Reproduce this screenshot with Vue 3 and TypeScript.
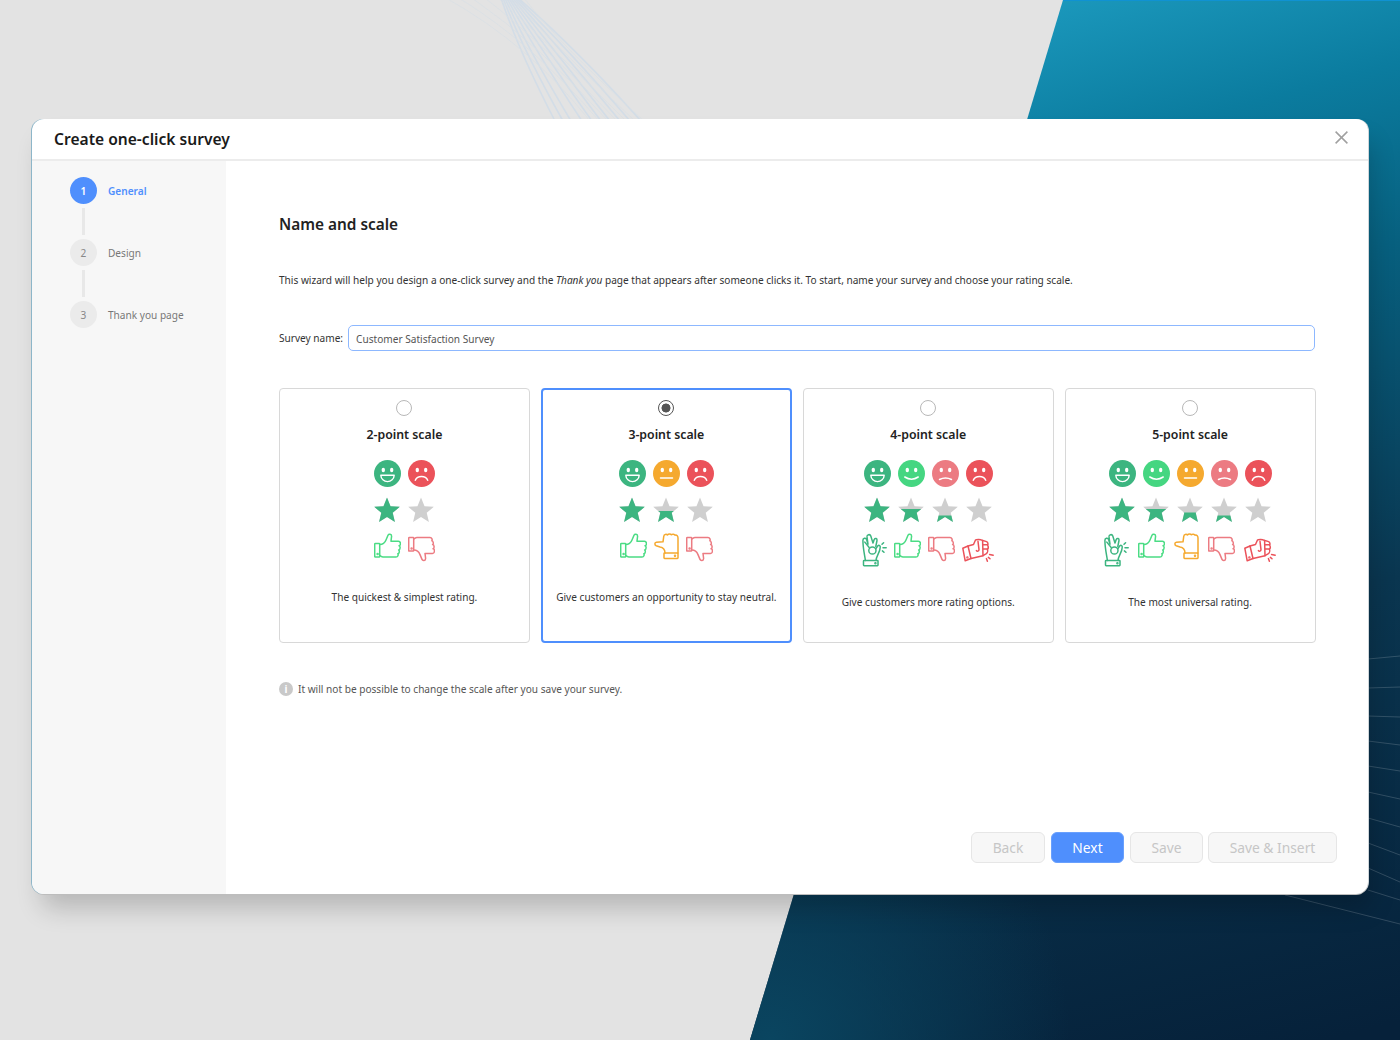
<script setup lang="ts">
type Face = 'vhappy' | 'happy' | 'neutral' | 'sad' | 'vsad'
type Hand = 'ok' | 'up' | 'side' | 'down' | 'fist'
interface Scale {
  title: string
  faces: Face[]
  stars: number[]
  hands: Hand[]
  desc: string
  checked?: boolean
}

const scales: Scale[] = [
  { title: '2-point scale', faces: ['vhappy', 'vsad'], stars: [0, 100], hands: ['up', 'down'], desc: 'The quickest & simplest rating.' },
  { title: '3-point scale', faces: ['vhappy', 'neutral', 'vsad'], stars: [0, 55, 100], hands: ['up', 'side', 'down'], desc: 'Give customers an opportunity to stay neutral.', checked: true },
  { title: '4-point scale', faces: ['vhappy', 'happy', 'sad', 'vsad'], stars: [0, 47, 74, 100], hands: ['ok', 'up', 'down', 'fist'], desc: 'Give customers more rating options.' },
  { title: '5-point scale', faces: ['vhappy', 'happy', 'neutral', 'sad', 'vsad'], stars: [0, 47, 61, 74, 100], hands: ['ok', 'up', 'side', 'down', 'fist'], desc: 'The most universal rating.' },
]

const handSize: Record<Hand, [number, number]> = {
  ok: [25, 34],
  up: [27, 29],
  side: [25, 29],
  down: [27, 29],
  fist: [32, 34],
}

const steps = [
  { n: 1, label: 'General', active: true },
  { n: 2, label: 'Design', active: false },
  { n: 3, label: 'Thank you page', active: false },
]

const thickEnds = [555, 563, 571, 582, 592, 601, 610, 620, 630, 641]
const thick = thickEnds.map((end, i) => {
  const top = 501 + i * 1.9
  const cx = top + (end - top) * (0.32 + i * 0.018)
  return `M${top} -2 Q${cx} 50 ${end} 121`
})
const thin = [0, 1, 2, 3, 4, 5, 6].map((i) => {
  const top = 446 + i * 13
  return `M${top} -2 Q${530 + i * 5} 45 ${590 + i * 9} 121`
})
const rightLines = [
  [659, 656], [688, 687], [716, 717], [741, 745], [766, 771], [792, 799], [818, 827], [843, 855], [868, 882], [890, 900],
]
</script>

<template>
  <div class="page">
    <svg class="backdrop" width="1400" height="1040" viewBox="0 0 1400 1040">
      <defs>
        <linearGradient id="panel" gradientUnits="userSpaceOnUse" x1="1050" y1="0" x2="1330" y2="1040">
          <stop offset="0" stop-color="#1b98bc" />
          <stop offset="0.14" stop-color="#0b7c9f" />
          <stop offset="0.3" stop-color="#07607f" />
          <stop offset="0.6" stop-color="#0a3650" />
          <stop offset="1" stop-color="#06213a" />
        </linearGradient>
        <radialGradient id="glow" gradientUnits="userSpaceOnUse" cx="770" cy="1040" r="300">
          <stop offset="0" stop-color="#0a4560" />
          <stop offset="1" stop-color="#0a4560" stop-opacity="0" />
        </radialGradient>
      </defs>
      <polygon points="1063,0 1400,0 1400,1040 750,1040" fill="url(#panel)" />
      <polygon points="1063,0 1400,0 1400,1040 750,1040" fill="url(#glow)" />
      <rect x="1063" y="0" width="337" height="1" fill="#1092d2" />
      <g fill="none" stroke="#d3dde7" stroke-width="1.6">
        <path v-for="d in thick" :key="d" :d="d" />
      </g>
      <g fill="none" stroke="#d9dfe5" stroke-width="0.8">
        <path v-for="d in thin" :key="d" :d="d" />
      </g>
      <g stroke="#ffffff" stroke-opacity="0.17" stroke-width="1">
        <line v-for="l in rightLines" :key="l[0]" x1="1368" :y1="l[0]" x2="1400" :y2="l[1]" />
        <line x1="1285" y1="895" x2="1400" y2="924" />
      </g>
    </svg>

    <svg class="defs" width="0" height="0">
      <defs>
        <symbol id="vhappy" viewBox="0 0 27 27">
          <circle cx="13.5" cy="13.5" r="13.5" fill="#3cb580" />
          <ellipse cx="9.3" cy="10" rx="1.7" ry="2.2" fill="#fff" />
          <ellipse cx="17.7" cy="10" rx="1.7" ry="2.2" fill="#fff" />
          <path d="M6.8 15.2H20.2C20 19 17 21.6 13.5 21.6S7 19 6.8 15.2Z" fill="none" stroke="#fff" stroke-width="1.4" stroke-linejoin="round" />
        </symbol>
        <symbol id="happy" viewBox="0 0 27 27">
          <circle cx="13.5" cy="13.5" r="13.5" fill="#45d681" />
          <ellipse cx="9.3" cy="10" rx="1.7" ry="2.2" fill="#fff" />
          <ellipse cx="17.7" cy="10" rx="1.7" ry="2.2" fill="#fff" />
          <path d="M6.8 17Q13.5 21.4 20.2 17" fill="none" stroke="#fff" stroke-width="1.5" stroke-linecap="round" />
        </symbol>
        <symbol id="neutral" viewBox="0 0 27 27">
          <circle cx="13.5" cy="13.5" r="13.5" fill="#f5a92f" />
          <ellipse cx="9.3" cy="10" rx="1.7" ry="2.2" fill="#fff" />
          <ellipse cx="17.7" cy="10" rx="1.7" ry="2.2" fill="#fff" />
          <path d="M7.5 18H19.5" fill="none" stroke="#fff" stroke-width="1.5" stroke-linecap="round" />
        </symbol>
        <symbol id="sad" viewBox="0 0 27 27">
          <circle cx="13.5" cy="13.5" r="13.5" fill="#ec7b82" />
          <ellipse cx="9.3" cy="10" rx="1.7" ry="2.2" fill="#fff" />
          <ellipse cx="17.7" cy="10" rx="1.7" ry="2.2" fill="#fff" />
          <path d="M7.5 19.5Q13.5 16.4 19.5 19.5" fill="none" stroke="#fff" stroke-width="1.5" stroke-linecap="round" />
        </symbol>
        <symbol id="vsad" viewBox="0 0 27 27">
          <circle cx="13.5" cy="13.5" r="13.5" fill="#eb525a" />
          <ellipse cx="9.3" cy="10" rx="1.7" ry="2.2" fill="#fff" />
          <ellipse cx="17.7" cy="10" rx="1.7" ry="2.2" fill="#fff" />
          <path d="M7.3 20.2C9.5 15.4 17.5 15.4 19.7 20.2" fill="none" stroke="#fff" stroke-width="1.5" stroke-linecap="round" />
        </symbol>

        <symbol id="up" viewBox="0 0 27 29">
          <g fill="none" stroke="#4bdc84" stroke-width="1.5" stroke-linejoin="round" stroke-linecap="round">
            <rect x="0.7" y="10.5" width="5" height="13.5" rx="0.6" />
            <circle cx="3.6" cy="21" r="0.5" fill="#4bdc84" />
            <path d="M5.7 11.5C8.2 11.5 11 9.5 12 7L14 2.2C14.6 0.8 17.6 0.6 17.6 3.2L17 8.2H24.5C27 8.2 27 12.6 25 12.8C26.6 13.2 26.4 16.8 24.6 17C25.8 17.6 25.4 20.6 23.8 20.8C24.6 21.6 24 24 22 24H9C7.5 24 6.8 23 5.7 22.5" />
          </g>
        </symbol>
        <symbol id="down" viewBox="0 0 27 29">
          <g transform="translate(0 28.6) scale(1 -1)" fill="none" stroke="#ec7b82" stroke-width="1.5" stroke-linejoin="round" stroke-linecap="round">
            <rect x="0.7" y="10.5" width="5" height="13.5" rx="0.6" />
            <circle cx="3.6" cy="13.2" r="0.5" fill="#ec7b82" />
            <path d="M5.7 11.5C8.2 11.5 11 9.5 12 7L14 2.2C14.6 0.8 17.6 0.6 17.6 3.2L17 8.2H24.5C27 8.2 27 12.6 25 12.8C26.6 13.2 26.4 16.8 24.6 17C25.8 17.6 25.4 20.6 23.8 20.8C24.6 21.6 24 24 22 24H9C7.5 24 6.8 23 5.7 22.5" />
          </g>
        </symbol>
        <symbol id="side" viewBox="0 0 25 29">
          <g fill="none" stroke="#f5a92f" stroke-width="1.5" stroke-linejoin="round" stroke-linecap="round">
            <rect x="10" y="20" width="14" height="5.4" rx="0.6" />
            <circle cx="21" cy="22.8" r="0.5" fill="#f5a92f" />
            <path d="M11 20C11 16 9 14.5 6 14L2.2 12.8C0.4 12 0.4 9.4 2.4 9.2L9 8.8L9.8 3.2C10 1 12.6 1 13.4 2C14.4 0.6 16.8 0.8 17.4 1.8C18.4 0.8 20.6 1.2 21 2.2C23 1.8 24 3 24 5V20" />
          </g>
        </symbol>
        <symbol id="ok" viewBox="0 0 25 34">
          <g transform="translate(0 0.5)" fill="none" stroke="#3cb580" stroke-width="1.5" stroke-linejoin="round" stroke-linecap="round">
            <rect x="1.5" y="27" width="14.5" height="5.2" rx="0.6" />
            <circle cx="13.4" cy="29.7" r="0.5" fill="#3cb580" />
            <path d="M3.4 27C2.8 22 1 15.6 0.9 7C0.8 4.6 3.8 3.8 4.6 6L6 10.8L5 3.4C4.8 1 8 0.2 8.8 2.6L11 9.6L12.2 6C13.2 4.2 15.4 5 15 7L13.8 13" />
            <path d="M2.8 8.6L7.2 14" />
            <circle cx="10.4" cy="17" r="3.6" />
            <path d="M13.8 15.2L15.8 12.4C17 11.2 18.6 12.2 18.2 14C18.2 16.6 17 19 15.8 21.4C14.8 23.4 14 25 14 27" />
            <path d="M20 10.8L21.6 9.2M21 14.2H24.2M20.4 17.4L22 18.8" />
          </g>
        </symbol>
        <symbol id="fist" viewBox="0 0 32 34">
          <g transform="translate(0 6)" fill="none" stroke="#eb525a" stroke-width="1.5" stroke-linejoin="round" stroke-linecap="round">
            <path d="M0.8 9.2L6 7L9 19.5L3.2 21.8Z" />
            <circle cx="5.4" cy="18.4" r="0.45" fill="#eb525a" />
            <path d="M6 7L11.5 5.5L13.5 1C14 0.4 18.6 0 20 1.2L24.6 2.6C26 3.2 26.2 5 25.6 6C26.4 7.4 26.2 9.6 25.4 10.4C26 11.6 25.6 13.8 24.4 14.6L21 16.7L9 19.5" />
            <path d="M16 2.3L17 10.6C17 12.2 15.2 12.8 14.4 11.6" />
            <path d="M20.6 1.4L21 16.7M21 5.8H25.6M21 10H25.4" />
            <path d="M27.6 15.4L31.2 16.2M26.4 18.4L28 19.8M24.4 19.6L25.4 22.2" />
          </g>
        </symbol>
      </defs>
    </svg>

    <section class="dialog">
      <header class="dialog-head">
        <h1 class="dialog-title">Create one-click survey</h1>
        <svg class="close" width="13" height="13" viewBox="0 0 13 13">
          <path d="M.6 .6L12.4 12.4M12.4 .6L.6 12.4" fill="none" stroke="#a0a0a0" stroke-width="1.5" />
        </svg>
      </header>
      <div class="dialog-body">
        <aside class="side">
          <template v-for="(s, i) in steps" :key="s.n">
            <div v-if="i > 0" class="connector"></div>
            <div class="step" :class="{ active: s.active }">
              <span class="step-num">{{ s.n }}</span>
              <span class="step-label">{{ s.label }}</span>
            </div>
          </template>
        </aside>
        <main class="main">
          <h2 class="heading">Name and scale</h2>
          <p class="intro">This wizard will help you design a one-click survey and the <em>Thank you</em> page that appears after someone clicks it. To start, name your survey and choose your rating scale.</p>
          <div class="name-row">
            <span class="name-label">Survey name:</span>
            <div class="name-input">Customer Satisfaction Survey</div>
          </div>
          <div class="cards">
            <article v-for="c in scales" :key="c.title" class="card" :class="{ selected: c.checked }">
              <span class="radio" :class="{ on: c.checked }"></span>
              <h3 class="card-title">{{ c.title }}</h3>
              <div class="row faces">
                <span v-for="(f, i) in c.faces" :key="i" class="cell">
                  <svg width="27" height="27"><use :href="'#' + f" /></svg>
                </span>
              </div>
              <div class="row stars">
                <span v-for="(p, i) in c.stars" :key="i" class="cell">
                  <svg width="26" height="26" viewBox="0 0 26 26">
                    <path class="star-bg" d="M13 .5L16.53 9.15 25.84 9.83 18.71 15.85 20.94 24.92 13 20 5.06 24.92 7.29 15.85 .16 9.83 9.47 9.15Z" />
                    <path v-if="p < 100" class="star-fg" :style="{ clipPath: `inset(${p}% 0 0 0)` }" d="M13 .5L16.53 9.15 25.84 9.83 18.71 15.85 20.94 24.92 13 20 5.06 24.92 7.29 15.85 .16 9.83 9.47 9.15Z" />
                  </svg>
                </span>
              </div>
              <div class="row hands" :class="{ wide: c.hands.length === 5 }">
                <svg v-for="(h, i) in c.hands" :key="i" class="hand" :width="handSize[h][0]" :height="handSize[h][1]"><use :href="'#' + h" /></svg>
              </div>
              <p class="card-desc">{{ c.desc }}</p>
            </article>
          </div>
          <div class="note">
            <span class="info">i</span>
            <span>It will not be possible to change the scale after you save your survey.</span>
          </div>
          <footer class="actions">
            <button class="btn b-back">Back</button>
            <button class="btn primary b-next">Next</button>
            <button class="btn b-save">Save</button>
            <button class="btn b-insert">Save &amp; Insert</button>
          </footer>
        </main>
      </div>
    </section>
  </div>
</template>

<style scoped>
.page {
  position: relative;
  width: 1400px;
  height: 1040px;
  overflow: hidden;
  background: #e3e3e3;
  padding: 119px 32px 0;
  box-sizing: border-box;
  font-family: "Noto Sans", "Open Sans", sans-serif;
  color: #333;
}
.backdrop {
  position: absolute;
  left: 0;
  top: 0;
}
.defs {
  position: absolute;
}
.dialog {
  position: relative;
  width: 1336px;
  height: 775px;
  background: #fff;
  border-radius: 12px;
  overflow: hidden;
  display: flex;
  flex-direction: column;
  box-shadow: -1px 0 0 #8db6c9, 0 1px 0 #bdbdbd, 1px 0 0 #cfd6da, 6px 18px 26px -4px rgba(0, 0, 0, 0.2);
}
.dialog-head {
  height: 42px;
  flex: none;
  box-sizing: border-box;
  border-bottom: 2px solid #ececec;
  display: flex;
  align-items: center;
  justify-content: space-between;
  padding: 0 20px 0 22px;
}
.dialog-title {
  margin: 0;
  font-size: 15.6px;
  font-weight: 600;
  color: #1a1a1a;
  line-height: 40px;
}
.close {
  margin-bottom: 3px;
}
.dialog-body {
  flex: 1;
  display: flex;
  min-height: 0;
}
.side {
  width: 194px;
  flex: none;
  background: #f7f7f7;
  box-sizing: border-box;
  padding: 16px 0 0 38px;
}
.step {
  display: flex;
  align-items: center;
  gap: 11px;
  font-size: 10.1px;
  color: #777;
}
.step-num {
  width: 27px;
  height: 27px;
  border-radius: 50%;
  background: #ebebeb;
  display: flex;
  align-items: center;
  justify-content: center;
  color: #888;
}
.step.active .step-num {
  background: #4f8ffd;
  color: #fff;
  font-weight: 600;
}
.step.active .step-label {
  color: #4f8ffd;
  font-weight: 600;
}
.connector {
  width: 3px;
  height: 27px;
  margin: 4px 0 4px 12px;
  background: #e8e8e8;
}
.main {
  flex: 1;
  box-sizing: border-box;
  padding: 53px 53px 31px 53px;
  display: flex;
  flex-direction: column;
}
.heading {
  margin: 0;
  font-size: 15.4px;
  line-height: 22px;
  font-weight: 600;
  color: #222;
}
.intro {
  margin: 36px 0 0;
  font-size: 10.1px;
  line-height: 16px;
  color: #333;
}
.name-row {
  margin-top: 37px;
  display: flex;
  align-items: center;
  gap: 5px;
  font-size: 10.1px;
}
.name-input {
  flex: 1;
  height: 26px;
  box-sizing: border-box;
  border: 1.5px solid #8db8ff;
  border-radius: 5px;
  padding: 0 7px;
  line-height: 26px;
  color: #555;
}
.cards {
  margin: 37px -0.5px 0 0;
  display: grid;
  grid-template-columns: repeat(4, 1fr);
  gap: 11px;
}
.card {
  height: 255px;
  box-sizing: border-box;
  border: 1.5px solid #d8d8d8;
  border-radius: 4px;
  padding-top: 10.5px;
  display: flex;
  flex-direction: column;
  align-items: center;
}
.card.selected {
  border: 2px solid #4f8ffd;
  padding-top: 10px;
}
.radio {
  width: 16px;
  height: 16px;
  box-sizing: border-box;
  border: 1px solid #b8b8b8;
  border-radius: 50%;
  background: #fff;
  flex: none;
}
.radio.on {
  border-color: #555;
  background: radial-gradient(circle, #555 0 4.2px, #fff 4.8px);
}
.card-title {
  margin: 10px 0 0;
  font-size: 12.3px;
  line-height: 18px;
  font-weight: 600;
  color: #222;
}
.row {
  display: flex;
  justify-content: center;
  align-items: flex-start;
}
.cell {
  width: 34px;
  display: flex;
  justify-content: center;
}
.cell svg {
  display: block;
}
.faces {
  margin-top: 16px;
  height: 28px;
}
.stars {
  margin-top: 9px;
  height: 26px;
}
.hands {
  margin-top: 10px;
  gap: 7px;
}
.hands.wide {
  gap: 9px;
}
.hand {
  display: block;
}
.star-bg {
  fill: #cfcfcf;
}
.star-fg {
  fill: #3cb580;
}
.card-desc {
  margin: 27px 0 0;
  font-size: 10.1px;
  line-height: 16px;
  color: #333;
  white-space: nowrap;
}
.note {
  margin-top: 38px;
  display: flex;
  align-items: center;
  gap: 5px;
  font-size: 10.1px;
  line-height: 16px;
  color: #555;
}
.info {
  width: 14px;
  height: 14px;
  border-radius: 50%;
  background: #c9c9c9;
  color: #fff;
  font-size: 10px;
  font-weight: 700;
  line-height: 14px;
  text-align: center;
}
.actions {
  margin-top: auto;
  margin-right: -22px;
  display: flex;
  justify-content: flex-end;
  gap: 6px;
}
.btn {
  height: 31px;
  box-sizing: border-box;
  border: 1.5px solid #e6e6e6;
  border-radius: 6px;
  background: #f7f7f7;
  color: #c6c6c6;
  font-family: inherit;
  font-size: 13.8px;
  padding: 0;
}
.btn.primary {
  background: #4f8ffd;
  border-color: #69a0fd;
  color: #fff;
}
.b-back { width: 74px; }
.b-next { width: 73px; }
.b-save { width: 73px; }
.b-insert { width: 129px; margin-left: -1px; }
</style>

<style>
html, body { margin: 0; }
</style>
